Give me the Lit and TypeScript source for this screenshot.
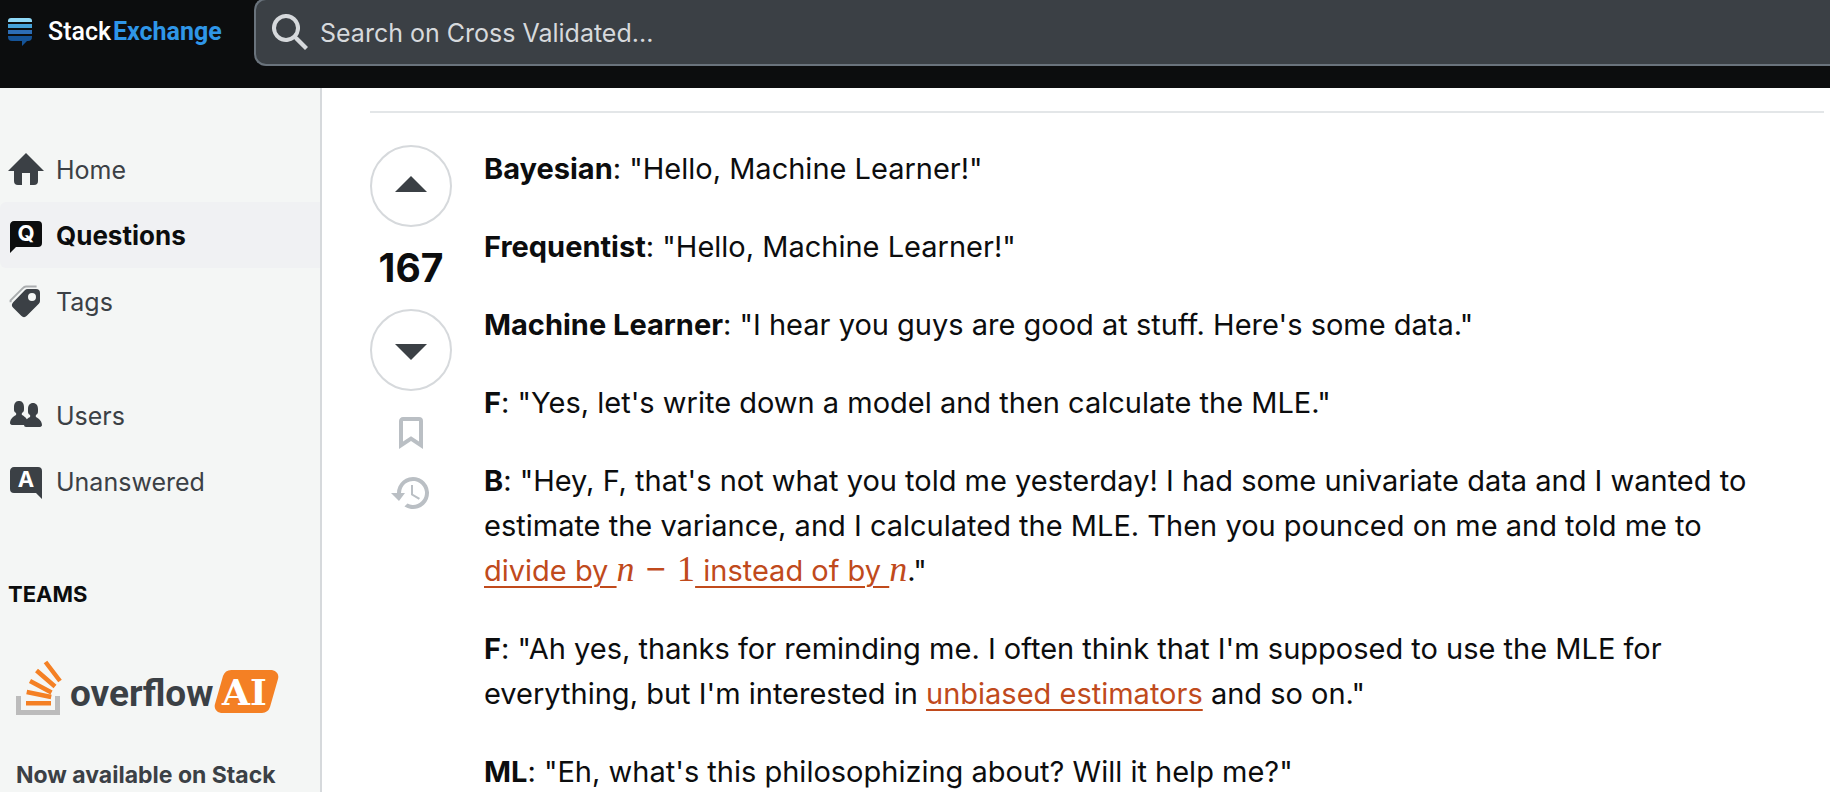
import { LitElement, html, css, svg } from "lit";
import { customElement } from "lit/decorators.js";

const icons = {
  home: svg`<path d="M15 10v5a2 2 0 0 1-2 2h-2v-6H7v6H5a2 2 0 0 1-2-2v-5H0l9-9 9 9h-3Z"/>`,
  questions: svg`<path d="M3 2h12a2 2 0 0 1 2 2v9a2 2 0 0 1-2 2H4l-3 3V4c0-1.1.9-2 2-2Z"/>
    <text class="glyph" x="9" y="12" text-anchor="middle">Q</text>`,
  tags: svg`<path fill-rule="evenodd" d="M9.8 3H14a2 2 0 0 1 2 2v4a2 2 0 0 1-.6 1.4l-6 6a2 2 0 0 1-2.8 0l-4-4a2 2 0 0 1 0-2.8l5.8-6A2 2 0 0 1 9.8 3ZM12 9a2 2 0 1 0 0-4 2 2 0 0 0 0 4Z"/>
    <path class="faded" d="M1.3 9.600v-.9l6-6c.5-.5 1-.9 1.700-.9h5.300"/>`,
  users: svg`<path d="M17 14c0 .44-.45 1-1 1H9a1 1 0 0 1-1-1H2c-.54 0-1-.56-1-1 0-2.63 3-4 3-4s.23-.4 0-1c-.84-.62-1.06-.59-1-3 .06-2.42 1.37-3 2.5-3s2.44.58 2.5 3c.06 2.41-.16 2.38-1 3-.23.59 0 1 0 1s1.55.71 2.42 2.09c.78-.72 1.58-1.1 1.58-1.1s.23-.4 0-1c-.84-.61-1.06-.58-1-3 .06-2.41 1.37-3 2.5-3s2.44.59 2.5 3c.05 2.42-.16 2.39-1 3-.23.6 0 1 0 1s3 1.38 3 4.01Z"/>`,
  unanswered: svg`<path d="M3 2h12a2 2 0 0 1 2 2v14l-3-3H3a2 2 0 0 1-2-2V4c0-1.1.9-2 2-2Z"/>
    <text class="glyph" x="9" y="12" text-anchor="middle">A</text>`,
};

@customElement("app-root")
export class AppRoot extends LitElement {
  static styles = css`
    :host { display: block; height: 100vh; overflow: hidden; background: #fff; color: #0c0d0e; font-family: Inter, "Liberation Sans", sans-serif; }
    * { box-sizing: border-box; }
    .page { display: flex; flex-direction: column; height: 100%; }
    .topbar { flex: none; display: flex; align-items: flex-start; height: 88px; background: #0c0d0e; overflow: hidden; }
    .brand { flex: none; display: flex; align-items: center; gap: 16px; width: 254px; height: 64px; padding-left: 8px; text-decoration: none; }
    .brand svg { width: 24px; height: 28px; }
    .wordmark { display: flex; gap: 2px; font: 500 25px/32px Roboto, sans-serif; color: #fff; white-space: nowrap; }
    .wordmark b { font-weight: 700; color: #2f96e8; }
    .search { flex: 1; display: flex; align-items: center; gap: 12px; height: 68px; margin-top: -2px; padding-left: 16px; background: #3b4045; border: 2px solid #6a737c; border-right: 0; border-radius: 12px 0 0 12px; }
    .search svg { flex: none; width: 36px; height: 36px; fill: #d6d9dc; }
    .search input { flex: 1; min-width: 0; border: 0; padding: 2px 0 0; outline: 0; background: none; color: #d6d9dc; font: 400 25px/32px Inter, sans-serif; }
    .search input::placeholder { color: #d6d9dc; opacity: 1; }
    .columns { flex: 1; min-height: 0; display: flex; }
    .sidebar { flex: none; width: 322px; padding-top: 48px; background: #f4f6f5; border-right: 2px solid #d6d9dc; overflow: hidden; }
    .nav { display: flex; flex-direction: column; margin: 0 0 48px; padding: 0; list-style: none; }
    .nav a { display: flex; align-items: center; gap: 12px; height: 66px; padding-left: 8px; color: #3b4045; fill: #3b4045; font-size: 25px; line-height: 32px; text-decoration: none; }
    .nav a.current { background: #f0f1f3; border-radius: 6px 0 0 6px; color: #0c0d0e; fill: #0c0d0e; font-size: 26px; font-weight: 700; }
    .nav span { padding-top: 2px; }
    .nav svg { width: 36px; height: 36px; overflow: visible; }
    .glyph { font: 700 11px Inter, sans-serif; fill: #fff; }
    .faded { fill: none; stroke: currentColor; stroke-width: 1; opacity: .4; }
    .teams { margin: 0; padding: 18px 8px 16px; font-size: 22px; line-height: 28px; font-weight: 700; }
    .promo { padding: 36px 16px; color: #3b4045; font-size: 23px; line-height: 28px; font-weight: 700; white-space: nowrap; }
    .promo svg { display: block; width: 264px; height: 56px; margin-bottom: 45px; }
    .promo p { margin: 0; }
    .logo-word { font: 700 37px Roboto, sans-serif; fill: #3b4045; }
    .logo-ai { font: 700 36px "DejaVu Serif", serif; fill: #fff; }
    .main { flex: 1; min-width: 0; padding: 23px 6px 0 48px; overflow: hidden; }
    .answer { display: flex; gap: 32px; padding-top: 32px; border-top: 2px solid #e3e6e8; }
    .votes { flex: none; width: 82px; display: flex; flex-direction: column; align-items: center; }
    .vote { display: grid; place-items: center; width: 82px; height: 82px; padding: 0; background: #fff; border: 2px solid #d6d9dc; border-radius: 50%; fill: #3b4045; }
    .vote svg { width: 36px; height: 36px; }
    .score { height: 82px; font-size: 39px; line-height: 82px; font-weight: 700; }
    .tool { display: block; padding: 0; border: 0; background: none; fill: #babfc4; color: #babfc4; margin-top: 24px; }
    .tool svg { display: block; width: 38px; height: 36px; overflow: visible; }
    .body { flex: 1; min-width: 0; padding: 1px 32px 0 0; font-size: 29px; line-height: 45px; }
    .body p { margin: 0 0 33px; }
    .body a { color: #c04a1c; text-decoration: underline; text-decoration-thickness: 2px; text-underline-offset: 5px; }
    .math { display: inline-flex; gap: 11px; font-family: "Liberation Serif", serif; font-size: 36px; line-height: 32px; }
    .minus { font-weight: 700; }
  `;

  private item(label: string, icon: unknown, current = false) {
    return html`<li><a href="#" class=${current ? "current" : ""}><svg viewBox="0 0 18 18" aria-hidden="true">${icon}</svg><span>${label}</span></a></li>`;
  }

  render() {
    return html`<div class="page">
      <header class="topbar">
        <a class="brand" href="#" aria-label="Stack Exchange">
          <svg viewBox="0 0 24 28" aria-hidden="true">
            <path fill="#8fd8f7" d="M0 4V3a3 3 0 0 1 3-3h18a3 3 0 0 1 3 3v1Z"/>
            <path fill="#46a2d9" d="M0 6h24v4H0Z"/>
            <path fill="#2d6db5" d="M0 12h24v4H0Z"/>
            <path fill="#155397" d="M0 18h24v1a4 4 0 0 1-4 4h-1l-5 5v-5H4a4 4 0 0 1-4-4Z"/>
          </svg>
          <span class="wordmark"><span>Stack</span><b>Exchange</b></span>
        </a>
        <label class="search">
          <svg viewBox="0 0 18 18" aria-hidden="true"><path d="m18 16.5-5.14-5.18h-.35a7 7 0 1 0-1.19 1.19v.35L16.5 18l1.5-1.5ZM12 7A5 5 0 1 1 2 7a5 5 0 0 1 10 0Z"/></svg>
          <input type="text" placeholder="Search on Cross Validated..." aria-label="Search on Cross Validated">
        </label>
      </header>
      <div class="columns">
        <nav class="sidebar">
          <ul class="nav">
            ${this.item("Home", icons.home)}
            ${this.item("Questions", icons.questions, true)}
            ${this.item("Tags", icons.tags)}
          </ul>
          <ul class="nav">
            ${this.item("Users", icons.users)}
            ${this.item("Unanswered", icons.unanswered)}
          </ul>
          <h2 class="teams">TEAMS</h2>
          <div class="promo">
            <svg viewBox="0 0 264 56" role="img" aria-label="overflow AI">
              <path fill="none" stroke="#bcbcbc" stroke-width="5" d="M2.5 36v16.500h39V36"/>
              <g stroke="#f48024" stroke-width="4.500">
                <path d="M10 43.200h25M10.700 32l24.500 5M14 21l21.500 11.500M20.500 10.500l18.500 16M29.500 2 44 21"/>
              </g>
              <text class="logo-word" x="54" y="46">overflow</text>
              <path fill="#f48024" d="M216 10h40a7 7 0 0 1 6 9l-8 28a9 9 0 0 1-8 6h-41a7 7 0 0 1-6-9l8-28a9 9 0 0 1 9-6Z"/>
              <text class="logo-ai" x="206" y="45">AI</text>
            </svg>
            <p>Now available on Stack</p>
          </div>
        </nav>
        <main class="main">
          <article class="answer">
            <div class="votes">
              <button class="vote" aria-label="Up vote"><svg viewBox="0 0 18 18"><path d="M1 12h16L9 4Z"/></svg></button>
              <div class="score">167</div>
              <button class="vote" aria-label="Down vote"><svg viewBox="0 0 18 18"><path d="M1 6h16l-8 8Z"/></svg></button>
              <button class="tool" aria-label="Save"><svg viewBox="0 0 19 18"><path d="M3.500 17V3c0-1.100.9-2 2-2h8a2 2 0 0 1 2 2v14l-6-4-6 4Zm2-3.700 4-2.700 4 2.700V3h-8v10.300Z"/></svg></button>
              <button class="tool" aria-label="Show activity"><svg viewBox="0.5 0 19 18"><path d="M3 9a8 8 0 1 1 3.730 6.770L8.240 14.300A6 6 0 1 0 5 9.010L7 9l-3.010 4L0 9h3Z"/><path d="M10 5h1v4.500l3.500 2-.6.900L10 10V5Z"/></svg></button>
            </div>
            <div class="body">
              <p><b>Bayesian</b>: "Hello, Machine Learner!"</p>
              <p><b>Frequentist</b>: "Hello, Machine Learner!"</p>
              <p><b>Machine Learner</b>: "I hear you guys are good at stuff. Here's some data."</p>
              <p><b>F</b>: "Yes, let's write down a model and then calculate the MLE."</p>
              <p><b>B</b>: "Hey, F, that's not what you told me yesterday! I had some univariate data and I wanted to estimate the variance, and I calculated the MLE. Then you pounced on me and told me to <a href="#">divide by <span class="math"><i>n</i><span class="minus">−</span><span>1</span></span> instead of by <span class="math"><i>n</i></span></a>."</p>
              <p><b>F</b>: "Ah yes, thanks for reminding me. I often think that I'm supposed to use the MLE for everything, but I'm interested in <a href="#">unbiased estimators</a> and so on."</p>
              <p><b>ML</b>: "Eh, what's this philosophizing about? Will it help me?"</p>
            </div>
          </article>
        </main>
      </div>
    </div>`;
  }
}
